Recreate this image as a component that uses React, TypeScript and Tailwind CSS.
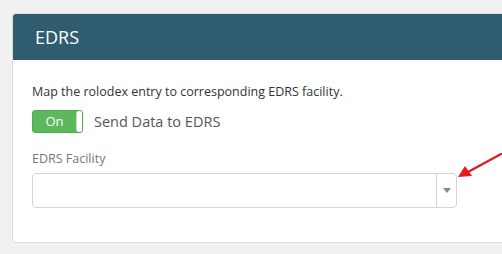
export default function App() {
  return (
    <div className="relative w-[502px] h-[254px] overflow-hidden bg-[#f1f1f1] pt-[13px] pl-[12px] font-['Open_Sans',sans-serif]">
      {/* Card */}
      <div className="w-[520px] h-[230px] bg-white border border-[#dcdcdc] rounded-[4px] overflow-hidden">
        <div className="h-[46px] bg-[#305c6f] flex items-center pl-[22px]">
          <h2 className="text-[18px] text-white leading-none">EDRS</h2>
        </div>

        <div className="px-[19px] pt-[23px]">
          <p className="text-[12.5px] leading-[18px] text-[#333]">Map the rolodex entry to corresponding EDRS facility.</p>

          <div className="flex items-center mt-[9px]">
            <div className="w-[51px] h-[23px] rounded-[3px] bg-[#5cb85c] border border-[#4cae4c] flex items-stretch overflow-hidden">
              <span className="flex-1 flex items-center justify-center text-[13px] text-white">On</span>
              <span className="w-[6px] bg-white rounded-l-[3px] border-l border-[#d5d5d5]"></span>
            </div>
            <span className="ml-[11px] text-[14.5px] text-[#555]">Send Data to EDRS</span>
          </div>

          <label className="block mt-[17px] text-[12.5px] leading-[18px] text-[#777]">EDRS Facility</label>

          <div className="mt-[5px] w-[425px] h-[35px] border border-[#d4d4d4] rounded-[4px] flex">
            <div className="flex-1"></div>
            <div className="w-[20px] border-l border-[#d4d4d4] flex items-center justify-center">
              <svg width="8" height="5" viewBox="0 0 8 5">
                <path d="M0 0 L8 0 L4 5 Z" fill="#888" />
              </svg>
            </div>
          </div>
        </div>
      </div>

      {/* Red annotation arrow */}
      <svg className="absolute left-0 top-0 pointer-events-none" width="502" height="254" viewBox="0 0 502 254">
        <line x1="501" y1="154" x2="468" y2="172" stroke="#e5181c" strokeWidth="2.2" strokeLinecap="round" />
        <path d="M458 177 L465 166 L472 176 Z" fill="#e5181c" />
      </svg>
    </div>
  );
}
